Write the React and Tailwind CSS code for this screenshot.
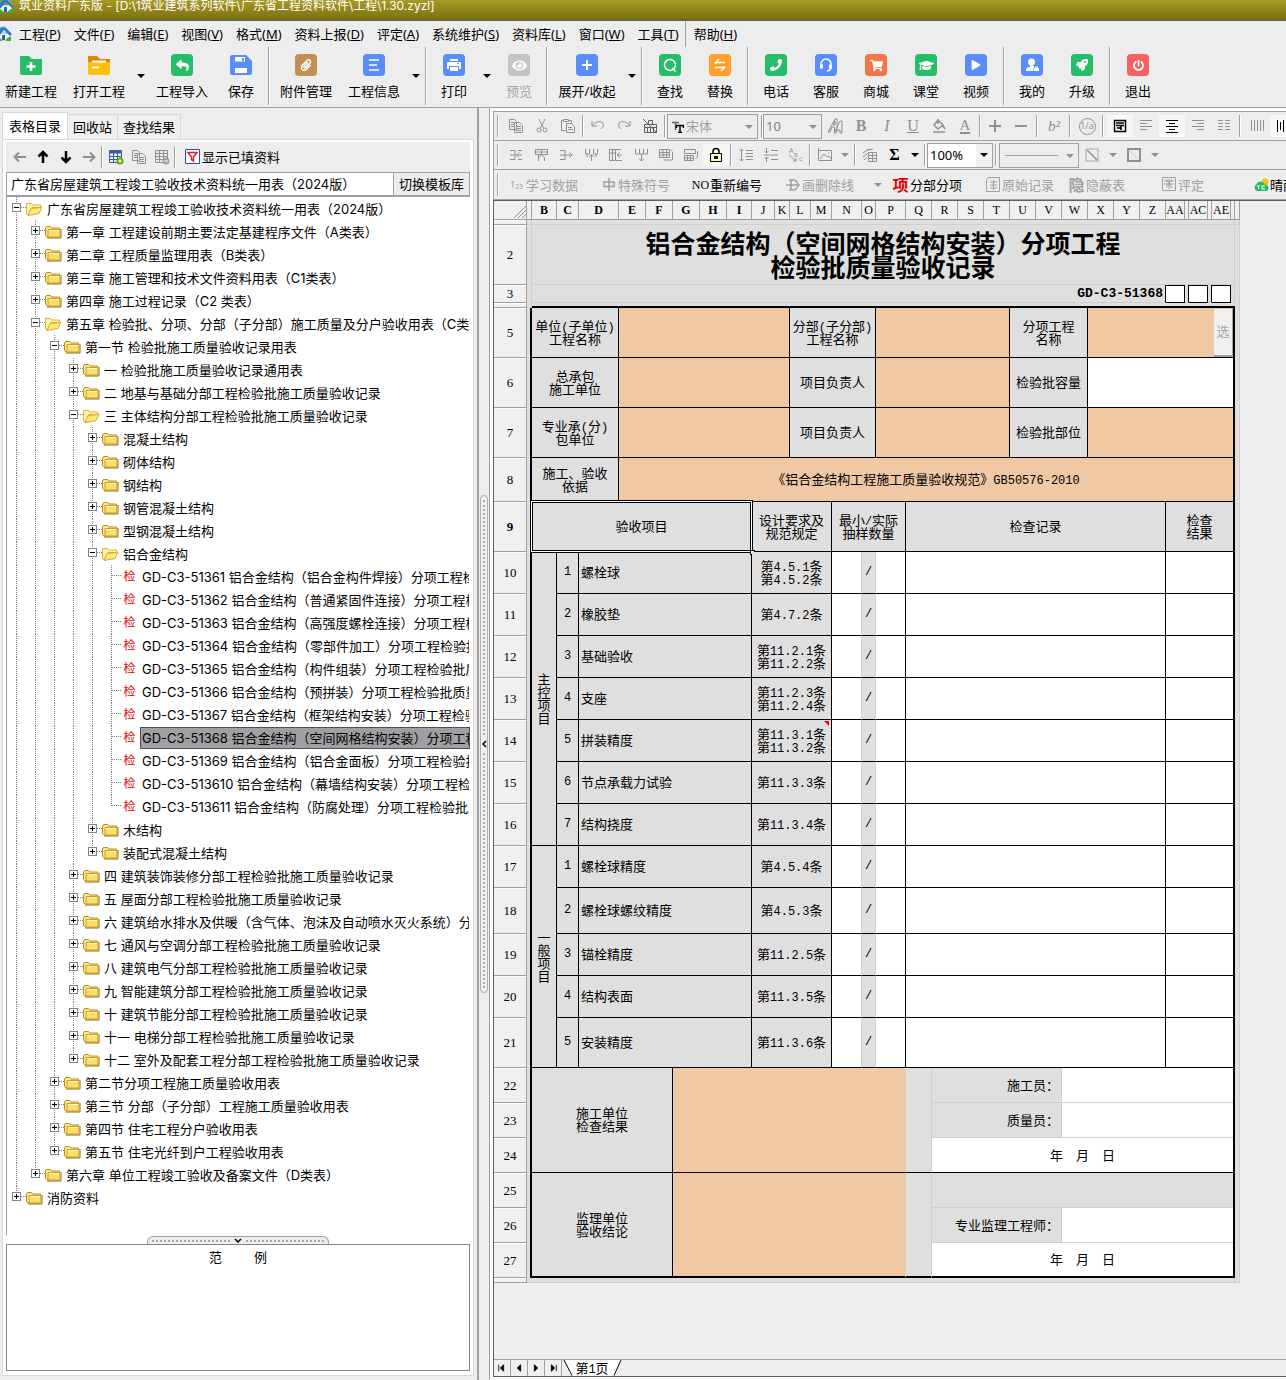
import React, { useState } from "react";
import {
  FaReply,
  FaPaperclip,
  FaEye,
  FaPhoneAlt,
  FaShoppingCart,
  FaGraduationCap,
  FaPlay,
  FaRocket,
  FaPowerOff,
} from "react-icons/fa";

/* ---------- Data ---------- */

const menus = [
  ["工程", "P"],
  ["文件", "F"],
  ["编辑", "E"],
  ["视图", "V"],
  ["格式", "M"],
  ["资料上报", "D"],
  ["评定", "A"],
  ["系统维护", "S"],
  ["资料库", "L"],
  ["窗口", "W"],
  ["工具", "T"],
];

const leaf = (label) => ({ label, leaf: true });
const closed = (label) => ({ label });

const tree = [
  {
    label: "广东省房屋建筑工程竣工验收技术资料统一用表（2024版）",
    openIcon: true,
    children: [
      closed("第一章 工程建设前期主要法定基建程序文件（A类表）"),
      closed("第二章 工程质量监理用表（B类表）"),
      closed("第三章 施工管理和技术文件资料用表（C1类表）"),
      closed("第四章 施工过程记录（C2 类表）"),
      {
        label: "第五章 检验批、分项、分部（子分部）施工质量及分户验收用表（C类表）",
        openIcon: true,
        children: [
          {
            label: "第一节 检验批施工质量验收记录用表",
            children: [
              closed("一 检验批施工质量验收记录通用表"),
              closed("二 地基与基础分部工程检验批施工质量验收记录"),
              {
                label: "三 主体结构分部工程检验批施工质量验收记录",
                openIcon: true,
                children: [
                  closed("混凝土结构"),
                  closed("砌体结构"),
                  closed("钢结构"),
                  closed("钢管混凝土结构"),
                  closed("型钢混凝土结构"),
                  {
                    label: "铝合金结构",
                    openIcon: true,
                    children: [
                      leaf("GD-C3-51361 铝合金结构（铝合金构件焊接）分项工程检验批质量验收记录"),
                      leaf("GD-C3-51362 铝合金结构（普通紧固件连接）分项工程检验批质量验收记录"),
                      leaf("GD-C3-51363 铝合金结构（高强度螺栓连接）分项工程检验批质量验收记录"),
                      leaf("GD-C3-51364 铝合金结构（零部件加工）分项工程检验批质量验收记录"),
                      leaf("GD-C3-51365 铝合金结构（构件组装）分项工程检验批质量验收记录"),
                      leaf("GD-C3-51366 铝合金结构（预拼装）分项工程检验批质量验收记录"),
                      leaf("GD-C3-51367 铝合金结构（框架结构安装）分项工程检验批质量验收记录"),
                      leaf("GD-C3-51368 铝合金结构（空间网格结构安装）分项工程检验批质量验收记录"),
                      leaf("GD-C3-51369 铝合金结构（铝合金面板）分项工程检验批质量验收记录"),
                      leaf("GD-C3-513610 铝合金结构（幕墙结构安装）分项工程检验批质量验收记录"),
                      leaf("GD-C3-513611 铝合金结构（防腐处理）分项工程检验批质量验收记录"),
                    ],
                  },
                  closed("木结构"),
                  closed("装配式混凝土结构"),
                ],
              },
              closed("四 建筑装饰装修分部工程检验批施工质量验收记录"),
              closed("五 屋面分部工程检验批施工质量验收记录"),
              closed("六 建筑给水排水及供暖（含气体、泡沫及自动喷水灭火系统）分部工程"),
              closed("七 通风与空调分部工程检验批施工质量验收记录"),
              closed("八 建筑电气分部工程检验批施工质量验收记录"),
              closed("九 智能建筑分部工程检验批施工质量验收记录"),
              closed("十 建筑节能分部工程检验批施工质量验收记录"),
              closed("十一 电梯分部工程检验批施工质量验收记录"),
              closed("十二 室外及配套工程分部工程检验批施工质量验收记录"),
            ],
          },
          closed("第二节分项工程施工质量验收用表"),
          closed("第三节 分部（子分部）工程施工质量验收用表"),
          closed("第四节 住宅工程分户验收用表"),
          closed("第五节 住宅光纤到户工程验收用表"),
        ],
      },
      closed("第六章 单位工程竣工验收及备案文件（D类表）"),
    ],
  },
  closed("消防资料"),
];

const columns = [
  ["", "w-[5px]"],
  ["B", "w-[25px]"],
  ["C", "w-[22px]"],
  ["D", "w-[40px]"],
  ["E", "w-[27px]"],
  ["F", "w-[27px]"],
  ["G", "w-[27px]"],
  ["H", "w-[27px]"],
  ["I", "w-[25px]"],
  ["J", "w-[23px]"],
  ["K", "w-[15px]"],
  ["L", "w-[21px]"],
  ["M", "w-[21px]"],
  ["N", "w-[30px]"],
  ["O", "w-[14px]"],
  ["P", "w-[30px]"],
  ["Q", "w-[26px]"],
  ["R", "w-[26px]"],
  ["S", "w-[26px]"],
  ["T", "w-[26px]"],
  ["U", "w-[26px]"],
  ["V", "w-[26px]"],
  ["W", "w-[26px]"],
  ["X", "w-[26px]"],
  ["Y", "w-[26px]"],
  ["Z", "w-[26px]"],
  ["AA", "w-[19px]"],
  ["", "w-[4px]"],
  ["AC", "w-[19px]"],
  ["", "w-[4px]"],
  ["AE", "w-[19px]"],
  ["", "w-[4px]"],
  ["", "w-[5px]"],
];

const items = [
  { row: 10, h: "h-[42px]", no: 1, name: "螺栓球", refs: ["第4.5.1条", "第4.5.2条"], group: "主控项目", span: 7 },
  { row: 11, h: "h-[42px]", no: 2, name: "橡胶垫", refs: ["第4.7.2条"] },
  { row: 12, h: "h-[42px]", no: 3, name: "基础验收", refs: ["第11.2.1条", "第11.2.2条"] },
  { row: 13, h: "h-[42px]", no: 4, name: "支座", refs: ["第11.2.3条", "第11.2.4条"] },
  { row: 14, h: "h-[42px]", no: 5, name: "拼装精度", refs: ["第11.3.1条", "第11.3.2条"], note: true },
  { row: 15, h: "h-[42px]", no: 6, name: "节点承载力试验", refs: ["第11.3.3条"] },
  { row: 16, h: "h-[42px]", no: 7, name: "结构挠度", refs: ["第11.3.4条"] },
  { row: 17, h: "h-[42px]", no: 1, name: "螺栓球精度", refs: ["第4.5.4条"], group: "一般项目", span: 5 },
  { row: 18, h: "h-[46px]", no: 2, name: "螺栓球螺纹精度", refs: ["第4.5.3条"] },
  { row: 19, h: "h-[42px]", no: 3, name: "锚栓精度", refs: ["第11.2.5条"] },
  { row: 20, h: "h-[42px]", no: 4, name: "结构表面", refs: ["第11.3.5条"] },
  { row: 21, h: "h-[50px]", no: 5, name: "安装精度", refs: ["第11.3.6条"] },
];

/* ---------- Icons ---------- */

const HouseIcon = () => (
  <svg viewBox="0 0 16 16" className="h-4 w-4 shrink-0">
    <path d="M2 7h12v7H2z" fill="#f4f8fb" stroke="#6c8ca0" strokeWidth=".6" />
    <path d="M0 8 5 1l4 0 7 7-2 2-6-6-5 6-3 0z" fill="#2b7cc4" />
    <path d="M5 1l4 0 6 6" fill="none" stroke="#7cbcf0" />
    <path d="M6 9h3v5H6z" fill="#2d6a94" />
    <path d="M0 11c3 0 5 1 6 4H1zM10 15c0-3 2-4 5-4v4z" fill="#3fae49" />
  </svg>
);

const FolderIcon = ({ open }) =>
  open ? (
    <svg viewBox="0 0 17 16" className="h-4 w-[17px] shrink-0">
      <path d="M.5 13V2.500h5l1 1.500h8v2.500H6L3 14z" fill="#fff3a6" stroke="#dcb53c" />
      <path d="M5 7.500c3 0 6-.5 11-1.500l-3 6.500-11 2z" fill="#ffe97c" stroke="#d9a92c" />
    </svg>
  ) : (
    <svg viewBox="0 0 17 16" className="h-4 w-[17px] shrink-0">
      <path d="M2 14h14V5" fill="none" stroke="#8a6a1c" />
      <path d="M.5 4 1.500 2.500h4L7 4h7.500v9H2L.5 11.500z" fill="#fce98e" stroke="#b98a1e" />
      <path d="M3 5.500h12v7.500H3z" fill="#fbdf6c" stroke="#cf9c24" />
      <path d="M4 6.500h10" stroke="#fff6c0" />
    </svg>
  );

const Tile = ({ className, children }) => (
  <span className={`flex h-[22px] w-[22px] items-center justify-center rounded text-white ${className}`}>
    {children}
  </span>
);

const Svg = ({ children, className = "h-4 w-4" }) => (
  <svg viewBox="0 0 16 16" fill="none" stroke="currentColor" className={className}>
    {children}
  </svg>
);

const Caret = ({ className = "border-t-black" }) => (
  <span className={`block h-0 w-0 border-x-4 border-t-4 border-x-transparent ${className}`} />
);

const glyphs = {
  copy: <path d="M1.500 1.500h5l2 2v8h-7zM6.500 4.500h5l3 3v7h-8zM8 8.500h5M8 10.500h5M8 12.500h5M3 4.500h3M3 6.500h3M3 8.500h3" />,
  cut: <path d="M5 1l4.500 9M11 1 6.500 10M5 10a2 2 0 1 0 .1 4 2 2 0 0 0 0-4M11 10a2 2 0 1 0 .1 4 2 2 0 0 0 0-4" />,
  paste: <path d="M3 2.500H1.500v10h4M9 2.500h2.500V5M3.500 1.500h5v2h-5zM6.500 5.500h5l3 3v6h-8zM8 9.500h4M8 11.500h5" />,
  undo: <path d="M2 3v5h5M2.500 7.500C5 3.500 11 2.500 13 5c1 2 0 4-2 6" />,
  redo: <path d="M14 3v5H9M13.500 7.500C11 3.500 5 2.500 3 5c-1 2 0 4 2 6" />,
  clear: <path d="M2.500 6.500h12v8h-12zM2 9.500h12M5.500 10v4M8.500 10v4M11.500 10v4M6.500 6V2.500h4V6M1 1l14 14" stroke="#606060" />,
  fill: <path d="M7 2 3 7l4 4 5-4zM7 1v5M11 6l3 5M2 14h12" strokeWidth="1.500" />,
  plus: <path d="M8 2v12M2 8h12" strokeWidth="2" />,
  minus: <path d="M2 8h12" strokeWidth="2" />,
  box: <path d="M2.500 2.500h11v11h-11zM4 5h8M4 7.500h8M5 10h5M9 12V7" strokeWidth="1.500" />,
  left: <path d="M2 2.500h12M2 5.500h7M2 8.500h12M2 11.500h7" />,
  center: <path d="M2 2.500h12M5 5.500h6M2 8.500h12M5 11.500h6M2 14.500h12" />,
  right: <path d="M2 2.500h12M7 5.500h7M2 8.500h12M7 11.500h7" />,
  justify: <path d="M2 2.500h5M9 2.500h5M2 5.500h5M9 5.500h5M2 8.500h5M9 8.500h5M2 11.500h5M9 11.500h5" />,
  bars: <path d="M2.500 2v11M5.500 2v11M8.500 2v11M11.500 2v11M14.500 2v11" />,
  bars2: <path d="M2.500 2v12M5.500 4v8M8.500 2v12M11.500 4v8" />,
  insRow: <path d="M2 3.500h5v9H2M2 8h5M14 8H9M11 5.500 8.500 8l2.500 2.500M10 3.500h4M10 12.500h4" />,
  insCol: <path d="M2.500 2.500h12v5h-12zM2 5h12M8.500 2v5M5.500 8v6M5.500 10.500l3-2.500 3 2.500V14" />,
  delRow: <path d="M2 3.500h5v9H2M2 8h12M11.500 5.500 14 8l-2.500 2.500" />,
  delCol: <path d="M2.500 2v5h4V2M10.500 2v5h4V2M8.500 14V8M6 10l2.500-2.500L11 10M4 7v3M13 7v3" />,
  split: <path d="M1.500 2.500h6v11h-6zM1.500 6h6M4.500 2v11M14 8H9M11.500 5.500 9 8l2.500 2.500M8 2.500h5M8 13.500h6" />,
  merge: <path d="M2.500 2v5h12V2M6.500 2v5M10.500 2v5M8.500 7v7M6 11.500 8.500 14l2.500-2.500" />,
  gridA: <path d="M1.500 2.500h10v8h-10zM1.500 5.500h10M1.500 8h10M5 2.500v8M8.500 2.500v8M14.500 5v8h-9M13 3.500h1.500" />,
  gridB: <path d="M1.500 2.500h11v4h-11zM1.500 8.500h9v5h-9zM1.500 11h9M4.500 8.500v5M7.500 8.500v5M14.500 4v6l-2 2" />,
  lineUp: <path d="M3.500 2v12M1.500 4l2-2 2 2M1.500 12l2 2 2-2M8 3.500h7M8 6.500h7M8 9.500h7M8 12.500h7" />,
  lineDn: <path d="M3.500 1v5M1.500 4l2 2 2-2M3.500 15v-5M1.500 12l2-2 2 2M8 3.500h7M1 8h14M8 12.500h7" />,
  picture: <path d="M1.500 3.500h13v10h-13zM3 12l4-5 3 3 2-1 2 3M11 6h1M1.500 1v3" />,
  note: <path d="M6.500 5.500h8v9h-8zM6 8.500h8M6 11.500h8M10.500 6v8M1 6l6-4M1 10l5-4M2 13l3-3M5 3l6-1" />,
  diag: (
    <>
      <path d="M2 2h12v12H2z" stroke="#c0c0c0" strokeWidth="1.500" />
      <path d="M3 3l10 10" strokeWidth="1.500" />
    </>
  ),
  frame: (
    <>
      <path d="M2 2h12v12H2z" strokeWidth="2" />
      <path d="M4 4l8 8" stroke="#c8c8c8" />
    </>
  ),
};

const Glyph = ({ name }) => <Svg>{glyphs[name]}</Svg>;

/* ---------- Top bars ---------- */

function MenuBar() {
  return (
    <nav className="flex h-[26px] items-center overflow-hidden whitespace-nowrap bg-[#ededed]">
      <div className="-ml-1 mr-[7px]">
        <HouseIcon />
      </div>
      <div className="flex gap-[13px]">
        {menus.map(([text, key]) => (
          <button key={key}>
            {text}(<u>{key}</u>)
          </button>
        ))}
      </div>
      <div className="ml-[6px] mr-2 h-full border-l border-[#a0a0a0]" />
      <button>
        帮助(<u>H</u>)
      </button>
    </nav>
  );
}

function BigButton({ label, width = "w-[50px]", disabled, children }) {
  return (
    <button
      disabled={disabled}
      className={`flex shrink-0 flex-col items-center gap-[5px] whitespace-nowrap pt-[3px] disabled:text-[#a8a8a8] ${width}`}
    >
      {children}
      <span className="leading-5">{label}</span>
    </button>
  );
}

const BigSep = () => (
  <div className="w-[6px] shrink-0 pl-[2px]">
    <div className="h-[58px] w-[2px] border-l border-r border-l-[#a0a0a0] border-r-white" />
  </div>
);

const BigCaret = () => (
  <button aria-label="更多" className="flex h-11 w-[15px] shrink-0 items-center justify-center">
    <Caret />
  </button>
);

function MainToolbar() {
  return (
    <div className="flex h-[60px] items-start overflow-hidden bg-[#ededed]">
      <div className="flex h-[58px] items-center">
        <BigButton label="新建工程" width="w-[62px] mr-[3px]">
          <svg viewBox="0 0 22 22" className="h-[22px] w-[22px]">
            <path d="M0 2h9l3 3h10v14a2 2 0 0 1-2 2H2a2 2 0 0 1-2-2z" fill="#27bd68" />
            <path d="M11 8v9M6.500 12.500h9" stroke="#fff" strokeWidth="2.500" />
          </svg>
        </BigButton>
        <BigButton label="打开工程" width="w-[68px]">
          <svg viewBox="0 0 22 22" className="h-[22px] w-[22px]">
            <path d="M0 2h9l3 3h10v6H0z" fill="#d98704" />
            <path d="M0 8h22v11a2 2 0 0 1-2 2H2a2 2 0 0 1-2-2z" fill="#ffc107" />
            <path d="M4 7.500h14M4 13.500h7" stroke="#fff" strokeWidth="2" />
          </svg>
        </BigButton>
        <BigCaret />
        <BigButton label="工程导入" width="w-[68px]">
          <Tile className="bg-[#27bd68]"><FaReply size={13} /></Tile>
        </BigButton>
        <BigButton label="保存">
          <svg viewBox="0 0 22 22" className="h-[22px] w-[22px]">
            <path d="M2 1h14l6 6v12a2 2 0 0 1-2 2H2a2 2 0 0 1-2-2V3a2 2 0 0 1 2-2z" fill="#588dfb" />
            <path d="M5 3h10v4.500H5zM5 14h12v5H5z" fill="#fff" />
            <path d="M12 4h2v3h-2z" fill="#588dfb" />
          </svg>
        </BigButton>
        <BigSep />
        <BigButton label="附件管理" width="w-[68px]">
          <Tile className="bg-[#bf9155]"><FaPaperclip size={12} /></Tile>
        </BigButton>
        <BigButton label="工程信息" width="w-[68px]">
          <Tile className="bg-[#588dfb]"><Svg><path d="M3 3h10M3 8h8M3 13h10" strokeWidth="1.500" /></Svg></Tile>
        </BigButton>
        <BigCaret />
        <BigSep />
        <BigButton label="打印">
          <Tile className="bg-[#588dfb]">
            <svg viewBox="0 0 16 16" className="h-4 w-4" fill="#fff">
              <path d="M4 2h8v2H4zM2 5h12a1 1 0 0 1 1 1v6h-2V9H3v3H1V6a1 1 0 0 1 1-1zM4 10h8v4H4z" />
              <path d="M11 6h2v1h-2z" fill="#588dfb" />
            </svg>
          </Tile>
        </BigButton>
        <BigCaret />
        <BigButton label="预览" disabled>
          <Tile className="bg-[#c4c4c4]"><FaEye size={15} /></Tile>
        </BigButton>
        <BigSep />
        <BigButton label="展开/收起" width="w-[74px]">
          <Tile className="bg-[#588dfb]"><Svg><path d="M8 3v10M3 8h10" strokeWidth="2" /></Svg></Tile>
        </BigButton>
        <BigCaret />
        <BigSep />
        <BigButton label="查找">
          <Tile className="bg-[#27bd68]">
            <Svg><circle cx="8" cy="8" r="5.500" strokeWidth="1.500" /><path d="m10.500 11 3 3.500" strokeWidth="1.500" /></Svg>
          </Tile>
        </BigButton>
        <BigButton label="替换">
          <Tile className="bg-[#ff9f2e]">
            <Svg><path d="M13 5.500H3.500l3.500-3.500M3 10.500h9.500L9 14M4 5v2M12 11V9" strokeWidth="1.500" /></Svg>
          </Tile>
        </BigButton>
        <BigSep />
        <BigButton label="电话">
          <Tile className="bg-[#27bd68]"><FaPhoneAlt size={12} className="-scale-x-100" /></Tile>
        </BigButton>
        <BigButton label="客服">
          <Tile className="bg-[#588dfb]">
            <Svg>
              <path d="M3 9V7a5 5 0 0 1 10 0v3c0 2-1 3.500-4 4" strokeWidth="1.500" />
              <path d="M3.500 7.500v4M12.500 7.500v4" strokeWidth="3" />
            </Svg>
          </Tile>
        </BigButton>
        <BigButton label="商城">
          <Tile className="bg-[#f3764a]"><FaShoppingCart size={13} /></Tile>
        </BigButton>
        <BigButton label="课堂">
          <Tile className="bg-[#27bd68]"><FaGraduationCap size={15} /></Tile>
        </BigButton>
        <BigButton label="视频">
          <Tile className="bg-[#588dfb]"><FaPlay size={10} /></Tile>
        </BigButton>
        <BigSep />
        <BigButton label="我的">
          <Tile className="bg-[#588dfb]">
            <svg viewBox="0 0 16 16" className="h-4 w-4" fill="currentColor">
              <circle cx="7.500" cy="5" r="3.500" />
              <path d="M6 8h3l1 2-1 4H2c0-3 1-4 4-4z" />
              <path d="M10 11h5v3h-5zM11 11V9.500h3V11h-1v-.5h-1v.5z" />
            </svg>
          </Tile>
        </BigButton>
        <BigButton label="升级">
          <Tile className="bg-[#27bd68]"><FaRocket size={12} /></Tile>
        </BigButton>
        <BigSep />
        <BigButton label="退出">
          <Tile className="bg-[#f56262]"><FaPowerOff size={11} /></Tile>
        </BigButton>
      </div>
    </div>
  );
}

/* ---------- Left panel ---------- */

function Guide({ line, last, branch, children }) {
  return (
    <span className="relative h-full w-[19px] shrink-0">
      {line && (
        <span
          className={`absolute left-[9px] top-0 border-l border-dotted border-[#808080] ${last ? "h-[11px]" : "h-full"}`}
        />
      )}
      {branch && <span className="absolute left-[9px] right-0 top-[10px] border-t border-dotted border-[#808080]" />}
      {children}
    </span>
  );
}

function TreeNode({ node, last, trail, selected, onSelect }) {
  const [open, setOpen] = useState(Boolean(node.children));
  const isSelected = selected === node.label;

  return (
    <li>
      <div className="flex h-[23px] items-center">
        {trail.map((line, i) => (
          <Guide key={i} line={line} />
        ))}
        <Guide line last={last} branch>
          {!node.leaf && (
            <button
              aria-label={node.label}
              onClick={() => setOpen(!open)}
              className="absolute left-[5px] top-[6px] flex h-[9px] w-[9px] items-center justify-center border border-[#848484] bg-white"
            >
              <span className="absolute h-px w-[5px] bg-black" />
              {!open && <span className="absolute h-[5px] w-px bg-black" />}
            </button>
          )}
        </Guide>
        {node.leaf ? (
          <span className="w-[17px] shrink-0 text-center text-[12px] text-[#e60000]">检</span>
        ) : (
          <FolderIcon open={node.openIcon} />
        )}
        <button
          onClick={() => onSelect(node.label)}
          className={`ml-[2px] h-[22px] overflow-hidden whitespace-nowrap border px-px text-left ${
            isSelected ? "min-w-0 flex-1 border-[#505050] bg-[#a0a0a4]" : "border-transparent"
          }`}
        >
          {node.label}
        </button>
      </div>
      {open && node.children && (
        <ul>
          {node.children.map((child, i) => (
            <TreeNode
              key={child.label}
              node={child}
              last={i === node.children.length - 1}
              trail={[...trail, !last]}
              selected={selected}
              onSelect={onSelect}
            />
          ))}
        </ul>
      )}
    </li>
  );
}

const SmallSep = ({ className = "mx-1" }) => (
  <span className={`h-[22px] w-[2px] shrink-0 border-l border-r border-l-[#a0a0a0] border-r-white ${className}`} />
);

function LeftPanel() {
  const [tab, setTab] = useState("表格目录");
  const [selected, setSelected] = useState(
    "GD-C3-51368 铝合金结构（空间网格结构安装）分项工程检验批质量验收记录"
  );

  return (
    <aside className="flex w-[479px] shrink-0 flex-col border-r-2 border-[#a0a0a0] bg-[#ededed] pb-1 pl-[2px] pr-[3px] pt-1">
      {/* Tabs */}
      <div className="flex h-[27px] items-end">
        {["表格目录", "回收站", "查找结果"].map((name) => (
          <button
            key={name}
            onClick={() => setTab(name)}
            className={`whitespace-nowrap border border-b-0 border-[#d9d9d9] ${
              tab === name ? "relative z-10 h-[27px] bg-white px-[6px]" : "h-[25px] border-l-0 bg-[#efefef] px-[5px]"
            }`}
          >
            {name}
          </button>
        ))}
      </div>

      <div className="flex flex-1 flex-col border border-[#d9d9d9] bg-white px-[3px] pb-1 pt-[2px]">
        <div className="flex h-[30px] items-center bg-[#ededed] pl-[2px] text-[#909090]">
          <button aria-label="后退" className="flex w-[23px] justify-center">
            <Svg><path d="M2 8h12M7 3.500 2.500 8 7 12.500" strokeWidth="2" /></Svg>
          </button>
          <button aria-label="上移" className="flex w-[23px] justify-center text-black">
            <Svg><path d="M8 14V3M3.500 7.500 8 3l4.500 4.500" strokeWidth="2.500" /></Svg>
          </button>
          <button aria-label="下移" className="flex w-[23px] justify-center text-black">
            <Svg><path d="M8 2v11M3.500 8.500 8 13l4.500-4.500" strokeWidth="2.500" /></Svg>
          </button>
          <button aria-label="前进" className="flex w-[23px] justify-center">
            <Svg><path d="M14 8H2M9 3.500 13.500 8 9 12.500" strokeWidth="2" /></Svg>
          </button>
          <SmallSep className="mx-px" />
          <button aria-label="添加表格" className="flex w-[23px] justify-center">
            <Svg>
              <path d="M1.500 1.500h12v12h-12zM1.500 7.500h12M1.500 10.500h12M5.500 4v9M9.500 4v9" stroke="#3e5f9e" />
              <path d="M1.500 3h12" stroke="#3e5f9e" strokeWidth="3" />
              <circle cx="12" cy="12" r="3.500" fill="#5aa800" stroke="none" />
              <path d="M12 10v4M10 12h4" stroke="#fff" />
            </Svg>
          </button>
          <button aria-label="复制表格" className="flex w-[23px] justify-center"><Glyph name="copy" /></button>
          <button aria-label="删除表格" className="flex w-[23px] justify-center">
            <Svg>
              <path d="M1.500 1.500h12v12h-12zM1.500 4.500h12M1.500 7.500h12M1.500 10.500h12M5.500 2v11M9.500 2v11" />
              <circle cx="12" cy="12" r="3.500" fill="#a0a0a0" stroke="none" />
              <path d="M10 12h4" stroke="#fff" />
            </Svg>
          </button>
          <SmallSep className="ml-px mr-[9px]" />
          <button className="flex items-center whitespace-nowrap text-black">
            <Svg className="mr-px h-4 w-4">
              <path d="M.5.5h14v14H.5z" fill="#fff" stroke="#2e4a9e" />
              <path d="M3 3.500h9L8.500 8v4l-2-1.500V8z" stroke="#e02020" strokeWidth="1.500" />
            </Svg>
            显示已填资料
          </button>
        </div>

        <div className="flex h-6 shrink-0 border border-[#a0a0a0]">
          <input
            aria-label="模板库"
            readOnly
            value="广东省房屋建筑工程竣工验收技术资料统一用表（2024版）"
            className="min-w-0 flex-1 bg-white px-1 font-['Inter','Noto_Sans_CJK_SC',sans-serif] outline-none"
          />
          <button className="w-[76px] border-l border-[#a0a0a0] bg-[#ededed] text-center">切换模板库</button>
        </div>

        <ul className="min-h-0 flex-1 overflow-hidden border-l border-t border-[#a0a0a0] font-['Inter','Noto_Sans_CJK_SC',sans-serif]">
          {tree.map((node, i) => (
            <TreeNode
              key={node.label}
              node={node}
              last={i === tree.length - 1}
              trail={[]}
              selected={selected}
              onSelect={setSelected}
            />
          ))}
        </ul>

        {/* Splitter grip */}
        <button
          aria-label="收起范例"
          className="mx-auto flex h-2 w-[182px] shrink-0 items-center gap-1 rounded-t-md border border-b-0 border-[#a0a0a0] bg-[#ededed] px-1"
        >
          <span className="flex-1 border-t-2 border-dotted border-[#a8a8a8]" />
          <svg viewBox="0 0 8 5" className="h-[5px] w-2"><path d="m1 1 3 3 3-3" fill="none" stroke="#000" strokeWidth="1.500" /></svg>
          <span className="flex-1 border-t-2 border-dotted border-[#a8a8a8]" />
        </button>
        <section className="h-[127px] shrink-0 border border-[#7d868e] pt-1 text-center">
          <h2 className="flex justify-center gap-8 leading-4">
            <span>范</span>
            <span>例</span>
          </h2>
        </section>
      </div>
    </aside>
  );
}

/* ---------- Right toolbars ---------- */

function Tool({ name, children, on, width = "w-[26px]" }) {
  return (
    <button
      aria-label={name}
      className={`flex h-[22px] shrink-0 items-center justify-center ${width} ${on ? "bg-[#f7f7f7] text-black" : ""}`}
    >
      {children || <Glyph name={name} />}
    </button>
  );
}

const FormatBar = () => (
  <div className="flex h-[29px] items-center overflow-hidden border-b border-[#a0a0a0] pl-[3px] text-[#909090]">
    <SmallSep className="ml-0 mr-1" />
    <Tool name="copy" />
    <Tool name="cut" />
    <Tool name="paste" />
    <SmallSep className="mx-px" />
    <Tool name="undo" />
    <Tool name="redo" />
    <Tool name="clear" />
    <SmallSep className="mx-px" />
    <div className="relative h-[25px] w-[91px] shrink-0 border border-[#a0a0a0]">
      <svg viewBox="0 0 12 12" className="absolute left-1 top-[6px] h-3 w-3">
        <path d="M0 1.500h7M3.500 1v8" stroke="#606060" strokeWidth="1.500" />
        <path d="M4 4.500h8M8 4v8M6 11.500h4M4.500 4v3M11.500 4v3" stroke="#000" strokeWidth="1.500" />
      </svg>
      <select aria-label="字体" disabled className="h-full w-full appearance-none bg-transparent pl-[18px] text-[#a0a0a0]">
        <option>宋体</option>
      </select>
      <Caret className="absolute right-1 top-[10px] border-t-[#909090]" />
    </div>
    <SmallSep className="ml-[3px] mr-0" />
    <div className="relative h-[25px] w-[59px] shrink-0 border border-[#a0a0a0]">
      <select aria-label="字号" disabled className="h-full w-full appearance-none bg-transparent pl-[2px] text-[#808080]">
        <option>10</option>
      </select>
      <Caret className="absolute right-1 top-[10px] border-t-[#909090]" />
    </div>
    <div className="flex shrink-0 font-['Liberation_Serif',serif] text-[16px]">
      <Tool name="字符">
        <Svg>
          <path d="M1 14 8 1h2v12H7.500V9H5l-2 5zM6 7h2V3z" />
          <path d="M7 15l6-12h2v12h-2v-3h-2l-2 3z" />
        </Svg>
      </Tool>
      <Tool name="加粗"><b>B</b></Tool>
      <Tool name="倾斜"><i>I</i></Tool>
      <Tool name="下划线"><u>U</u></Tool>
      <Tool name="fill" />
      <Tool name="颜色"><span className="border-b-2 border-[#909090] text-[15px] leading-[13px]">A</span></Tool>
    </div>
    <SmallSep className="mx-px" />
    <Tool name="plus" />
    <Tool name="minus" />
    <SmallSep className="ml-[2px] mr-[3px]" />
    <Tool name="上标"><i className="font-['Liberation_Serif',serif] text-[15px]">b²</i></Tool>
    <SmallSep className="ml-[2px] mr-[3px]" />
    <Tool name="分数">
      <span className="flex h-[17px] w-[17px] items-center justify-center rounded-full border border-[#909090] text-[9px]">1/a</span>
    </Tool>
    <SmallSep className="ml-[2px] mr-[3px]" />
    <Tool name="box" on />
    <Tool name="left" />
    <Tool name="center" on />
    <Tool name="right" />
    <Tool name="justify" />
    <SmallSep className="ml-[2px] mr-[3px]" />
    <Tool name="bars" />
    <Tool name="bars2" on />
  </div>
);

const EditBar = () => (
  <div className="flex h-[29px] items-center overflow-hidden border-b border-[#a0a0a0] pl-[3px] text-[#909090]">
    <SmallSep className="ml-0 mr-1" />
    {["insRow", "insCol", "delRow", "delCol", "split", "merge", "gridA", "gridB"].map((name) => (
      <Tool key={name} name={name} width="w-[25px]" />
    ))}
    <Tool name="锁定" on>
      <svg viewBox="0 0 16 16" className="h-4 w-4">
        <path d="M5 7V4.500a3 3 0 0 1 6 0V7" fill="none" stroke="#000" strokeWidth="1.500" />
        <path d="M2.500 6.500h11v8h-11z" fill="#fff9b0" stroke="#000" />
        <path d="M6 9h4v3H6z" fill="#00107c" />
      </svg>
    </Tool>
    <SmallSep className="mx-px" />
    <Tool name="lineUp" width="w-[25px]" />
    <Tool name="lineDn" width="w-[25px]" />
    <Tool name="文字方向" width="w-[25px]">
      <Svg>
        <path d="M1 8l7 6M8 11v3H5" />
        <text x="1" y="6" fontSize="7" fill="currentColor" stroke="none">A</text>
        <text x="6" y="10" fontSize="6" fill="currentColor" stroke="none">B</text>
        <text x="11" y="14" fontSize="6" fill="currentColor" stroke="none">C</text>
      </Svg>
    </Tool>
    <SmallSep className="mx-px" />
    <Tool name="picture" width="w-[25px]" />
    <Tool name="图片选项" width="w-4"><Caret className="border-t-[#909090]" /></Tool>
    <SmallSep className="mx-px" />
    <Tool name="note" width="w-[25px]" />
    <Tool name="求和" width="w-[25px]">
      <span className="font-['Liberation_Serif',serif] text-[16px] font-bold leading-none text-black">Σ</span>
    </Tool>
    <Tool name="求和选项" width="w-4"><Caret /></Tool>
    <SmallSep className="mx-px" />
    <div className="relative h-[25px] w-[66px] shrink-0 border border-[#a0a0a0] bg-white text-black">
      <select aria-label="缩放" className="h-full w-full appearance-none bg-transparent pl-[2px]">
        <option>100%</option>
      </select>
      <span className="pointer-events-none absolute right-0 top-0 flex h-full w-4 items-center justify-center bg-[#f0f0f0]">
        <Caret />
      </span>
    </div>
    <SmallSep className="ml-[2px] mr-[2px]" />
    <div className="relative h-[25px] w-[80px] shrink-0 border border-[#a0a0a0]">
      <select aria-label="线型" disabled className="h-full w-full appearance-none">
        <option></option>
      </select>
      <span className="absolute left-[5px] top-[11px] w-[53px] border-t border-[#a0a0a0]" />
      <Caret className="absolute right-1 top-[10px] border-t-[#909090]" />
    </div>
    <Tool name="diag" />
    <Tool name="斜线选项" width="w-4"><Caret className="border-t-[#909090]" /></Tool>
    <Tool name="frame" />
    <Tool name="边框选项" width="w-4"><Caret className="border-t-[#909090]" /></Tool>
  </div>
);

const TextTool = ({ icon, label, on, className }) => (
  <button className={`flex shrink-0 items-center whitespace-nowrap pl-1 ${className} ${on ? "text-black" : "text-[#a0a0a0]"}`}>
    <span className="flex w-[19px] shrink-0 justify-center">{icon}</span>
    {label}
  </button>
);

const FunctionBar = () => (
  <div className="flex h-[30px] items-center overflow-hidden border-b border-[#a0a0a0] pl-[3px]">
    <SmallSep className="ml-0 mr-1" />
    <TextTool className="w-[92px]" icon={<span className="text-[9px]">1<sub>23</sub></span>} label="学习数据" />
    <TextTool
      className="w-[92px]"
      icon={<Svg><path d="M3 5h10v4.500H3zM8 1v13" strokeWidth="1.500" /></Svg>}
      label="特殊符号"
    />
    <TextTool
      on
      className="w-[92px]"
      icon={<span className="font-['Liberation_Serif',serif] text-[12px]">NO</span>}
      label="重新编号"
    />
    <TextTool
      className="w-[84px]"
      icon={<Svg><path d="M4 3h5c5 1 5 9 0 10H4M6 3v10M1 8h14" strokeWidth="1.500" /></Svg>}
      label="画删除线"
    />
    <button aria-label="删除线选项" className="flex w-6 shrink-0 justify-end pr-[5px]">
      <Caret className="border-t-[#909090]" />
    </button>
    <TextTool
      on
      className="w-[92px]"
      icon={<b className="text-[16px] leading-4 text-[#e60000]">项</b>}
      label="分部分项"
    />
    <TextTool
      className="w-[84px]"
      icon={<Svg><path d="M3.500.5h11v14h-13v-11zM5 5h7M5 8h7M5 11h7M8.500 3v10" /></Svg>}
      label="原始记录"
    />
    <TextTool className="w-[92px]" icon={<b className="text-[16px] leading-4">隐</b>} label="隐蔽表" />
    <TextTool
      className="w-[92px]"
      icon={<Svg><path d="M1.500.5h13v13h-13zM3 4h10M3 7h10M5 2l6 9M11 2l-6 9M8 2v10" /></Svg>}
      label="评定"
    />
    <TextTool
      on
      className=""
      icon={
        <svg viewBox="0 0 16 14" className="h-[14px] w-4">
          <circle cx="12" cy="4" r="3.500" fill="#ffc107" />
          <path d="M4 13a4 4 0 0 1-.5-7 5 5 0 0 1 9 1A3 3 0 0 1 12.500 13z" fill="#27bd68" />
          <path d="M4 8h3M5.500 8v3M12 8H9v3h3" fill="none" stroke="#fff" />
        </svg>
      }
      label="晴雨表"
    />
  </div>
);

/* ---------- Sheet ---------- */

const RowHead = ({ children, bold }) => (
  <th
    className={`overflow-hidden border-b border-r border-[#a0a0a0] bg-[#f0f0f0] p-0 font-['Liberation_Serif',serif] text-[13px] leading-none shadow-[inset_0_1px_0_#fff] ${
      bold ? "font-bold" : "font-normal"
    }`}
  >
    {children}
  </th>
);

const tones = {
  gray: "bg-[#dfdfdf]",
  peach: "bg-[#f0c8a4]",
  white: "bg-white",
};

function Cell({ tone = "gray", span, rows, edge = "border-b border-r border-black", className = "", children }) {
  return (
    <td colSpan={span} rowSpan={rows} className={`p-0 text-center ${tones[tone]} ${edge} ${className}`}>
      {children}
    </td>
  );
}

const lastEdge = "border-b border-r-2 border-black";
const faint = "border-b border-r border-[#d0d0c8]";
const faintLast = "border-r-2 border-black shadow-[inset_0_-1px_0_#d0d0c8]";

// Latin runs are set in a monospace face, close to half the width of a CJK glyph
const Mixed = ({ text }) =>
  text.split(/([\x20-\x7e]+)/).map((part, i) =>
    i % 2 ? (
      <span key={i} className="font-['Liberation_Mono',monospace] text-[12px] leading-[0px]">{part}</span>
    ) : (
      part
    )
  );

const Lines = ({ of }) =>
  of.map((line) => (
    <div key={line}>
      <Mixed text={line} />
    </div>
  ));

function HeaderFields({ row, label, mid, right, tone = "peach", picker }) {
  return (
    <tr className="h-[50px]">
      <RowHead>{row}</RowHead>
      {row === 5 && <Cell rows={23} edge="border-r-2 border-black" />}
      <Cell span={3}><Lines of={label} /></Cell>
      <Cell span={7} tone="peach" />
      <Cell span={4}><Lines of={mid} /></Cell>
      <Cell span={5} tone="peach" />
      <Cell span={3}><Lines of={right} /></Cell>
      <Cell span={9} tone={tone} edge={lastEdge}>
        {picker && (
          <button className="float-right h-[48px] w-[19px] border-b-2 border-r border-[#a0a0a0] bg-[#f0f0f0] text-[#a8a8a8]">
            选
          </button>
        )}
      </Cell>
      {row === 5 && <Cell rows={23} edge="border-r border-[#d0d0c8]" />}
    </tr>
  );
}

function SignRow({ row, label, first, title, bottom }) {
  return (
    <tr className="h-[35px]">
      <RowHead>{row}</RowHead>
      {first && (
        <>
          <Cell span={5} rows={3} edge={title.edge}><Lines of={title.lines} /></Cell>
          <Cell span={10} rows={3} tone="peach" edge={title.faintEdge} />
          <Cell rows={3} edge={title.faintEdge} />
        </>
      )}
      {label === "date" && (
        <Cell span={15} tone="white" edge={bottom ? "border-b-2 border-r-2 border-black" : lastEdge}>年　月　日</Cell>
      )}
      {label === "" && <Cell span={15} edge={faintLast} />}
      {label && label !== "date" && (
        <>
          <Cell span={5} edge={faint} className="pr-[2px] !text-right">{label}：</Cell>
          <Cell span={10} tone="white" edge={faintLast} />
        </>
      )}
    </tr>
  );
}

function Sheet() {
  return (
    <table className="w-[746px] table-fixed border-separate border-spacing-0 text-[13px] leading-[13px]">
      <colgroup>
        <col className="w-[33px]" />
        {columns.map(([, width], i) => (
          <col key={i} className={width} />
        ))}
      </colgroup>
      <thead>
        <tr className="h-[19px]">
          <th className="border-b border-r border-[#a0a0a0] bg-[#f0f0f0] p-0">
            <svg viewBox="0 0 12 12" className="ml-auto mt-1 h-3 w-3" stroke="#909090">
              <path d="M0 12 12 0M4 12l8-8M8 12l4-4" />
            </svg>
          </th>
          {columns.map(([name], i) => (
            <th
              key={i}
              className={`border-b border-r border-[#a0a0a0] bg-[#f0f0f0] p-0 font-['Liberation_Serif',serif] text-[12px] leading-none ${
                i > 0 && i < 9 ? "font-bold" : "font-normal"
              }`}
            >
              {name}
            </th>
          ))}
        </tr>
      </thead>
      <tbody>
        <tr className="h-[5px]">
          <RowHead />
          <Cell edge={faint} />
          <Cell span={31} edge={faint} />
          <Cell edge={faint} />
        </tr>
        <tr className="h-[60px]">
          <RowHead>2</RowHead>
          <Cell rows={3} edge="border-r border-[#d0d0c8]" />
          <Cell span={31} edge={faint} className="text-[25px] font-bold leading-6">
            <Lines of={["铝合金结构（空间网格结构安装）分项工程", "检验批质量验收记录"]} />
          </Cell>
          <Cell rows={3} edge="border-r border-[#d0d0c8]" />
        </tr>
        <tr className="h-[18px]">
          <RowHead>3</RowHead>
          <Cell
            span={25}
            edge="border-b border-r border-b-[#d0d0c8] border-r-black"
            className="pr-[2px] !text-right font-['Liberation_Mono',monospace] text-[13px] font-bold leading-none"
          >
            GD-C3-51368
          </Cell>
          <Cell tone="white" edge="border-y border-r border-black" />
          <Cell edge="border-b border-r border-b-[#d0d0c8] border-r-black" />
          <Cell tone="white" edge="border-y border-r border-black" />
          <Cell edge="border-b border-r border-b-[#d0d0c8] border-r-black" />
          <Cell tone="white" edge="border-y border-r border-black" />
          <Cell edge={faint} />
        </tr>
        <tr className="h-[5px]">
          <RowHead />
          <Cell span={31} edge="border-b-2 border-black" />
        </tr>

        <HeaderFields row={5} label={["单位(子单位)", "工程名称"]} mid={["分部(子分部)", "工程名称"]} right={["分项工程", "名称"]} picker />
        <HeaderFields row={6} label={["总承包", "施工单位"]} mid={["项目负责人"]} right={["检验批容量"]} tone="white" />
        <HeaderFields row={7} label={["专业承(分)", "包单位"]} mid={["项目负责人"]} right={["检验批部位"]} />

        <tr className="h-[44px]">
          <RowHead>8</RowHead>
          <Cell span={3}><Lines of={["施工、验收", "依据"]} /></Cell>
          <Cell span={28} tone="peach" edge={lastEdge}>
            <Mixed text="《铝合金结构工程施工质量验收规范》GB50576-2010" />
          </Cell>
        </tr>
        <tr className="h-[50px]">
          <RowHead bold>9</RowHead>
          <Cell span={8} className="relative">
            验收项目
            {/* active cell frame */}
            <span className="pointer-events-none absolute inset-0 border border-black shadow-[0_0_0_1px_#fff,0_0_0_2px_#000]" />
            <span className="pointer-events-none absolute -bottom-1 -right-1 h-[5px] w-[5px] border border-black bg-white" />
          </Cell>
          <Cell span={4}><Lines of={["设计要求及", "规范规定"]} /></Cell>
          <Cell span={3}><Lines of={["最小/实际", "抽样数量"]} /></Cell>
          <Cell span={10}>检查记录</Cell>
          <Cell span={6} edge={lastEdge}><Lines of={["检查", "结果"]} /></Cell>
        </tr>

        {items.map((item) => (
          <tr key={item.row} className={item.h}>
            <RowHead>{item.row}</RowHead>
            {item.group && (
              <Cell rows={item.span}><Lines of={item.group.split("")} /></Cell>
            )}
            <Cell className="font-['Liberation_Mono',monospace] text-[12px]">{item.no}</Cell>
            <Cell span={6} className="pl-[2px] !text-left">{item.name}</Cell>
            <Cell span={4} className="relative">
              <Lines of={item.refs} />
              {item.note && (
                <span className="absolute right-[2px] top-px h-0 w-0 border-l-[5px] border-t-[5px] border-l-transparent border-t-red-600" />
              )}
            </Cell>
            <Cell tone="white" edge="border-b border-r border-b-black border-r-[#d0d0c8]" />
            <Cell edge="border-b border-r border-b-black border-r-[#d0d0c8]" className="font-['Liberation_Mono',monospace] text-[12px]">
              /
            </Cell>
            <Cell tone="white" />
            <Cell span={10} tone="white" />
            <Cell span={6} tone="white" edge={lastEdge} />
          </tr>
        ))}

        <SignRow
          row={22}
          label="施工员"
          first
          title={{
            lines: ["施工单位", "检查结果"],
            edge: "border-b border-r border-black",
            faintEdge: "border-b border-r border-b-black border-r-[#d0d0c8]",
          }}
        />
        <SignRow row={23} label="质量员" />
        <SignRow row={24} label="date" />
        <SignRow
          row={25}
          label=""
          first
          title={{
            lines: ["监理单位", "验收结论"],
            edge: "border-b-2 border-r border-black",
            faintEdge: "border-b-2 border-r border-b-black border-r-[#d0d0c8]",
          }}
        />
        <SignRow row={26} label="专业监理工程师" />
        <SignRow row={27} label="date" bottom />
        <tr className="h-[5px]">
          <RowHead />
          <Cell edge={faint} />
          <Cell span={31} edge={faint} />
          <Cell edge={faint} />
        </tr>
      </tbody>
    </table>
  );
}

const navPaths = [
  "M2 2v8M8 2 4 6l4 4z",
  "M8 2 4 6l4 4z",
  "M4 2l4 4-4 4z",
  "M4 2l4 4-4 4zM10 2v8",
];

function SheetTabs() {
  return (
    <div className="flex h-[17px] shrink-0 border-t border-[#a0a0a0]">
      {navPaths.map((d, i) => (
        <button key={i} aria-label={`翻页${i + 1}`} className="flex w-[17px] items-center justify-center border-r border-[#a0a0a0]">
          <svg viewBox="0 0 12 12" className="h-[10px] w-[10px]" stroke="#000"><path d={d} /></svg>
        </button>
      ))}
      <button className="relative flex w-[60px] items-center justify-center leading-none">
        <svg viewBox="0 0 60 16" className="absolute inset-0 h-4 w-[60px]">
          <path d="M2 0l8 15.500h42L59 0z" fill="#fff" />
          <path d="M2 0l8 15.500M52 15.500 59 0" stroke="#000" fill="none" />
        </svg>
        <span className="relative"><Mixed text="第1页" /></span>
      </button>
    </div>
  );
}

export default function App() {
  return (
    <div className="flex min-h-screen flex-col overflow-hidden bg-[#ededed] font-['Noto_Sans','Noto_Sans_CJK_SC',sans-serif] text-[13px] leading-5 text-black">
      {/* Title bar */}
      <header className="flex h-[21px] items-start overflow-hidden whitespace-nowrap border-b-2 border-[#6b6636] bg-linear-to-b from-[#a89a24] to-[#7c7210] text-white">
        <div className="-ml-[2px] -mt-[2px] mr-[5px]">
          <HouseIcon />
        </div>
        <h1 className="font-['Inter','Noto_Sans_CJK_SC',sans-serif] text-[12px] leading-3">
          筑业资料广东版 - [D:\1筑业建筑系列软件\广东省工程资料软件\工程\1.30.zyzl]
        </h1>
      </header>
      <MenuBar />
      <MainToolbar />

      <main className="flex flex-1 border-t border-[#a0a0a0] bg-[#ededed]">
        <LeftPanel />

        {/* Vertical splitter */}
        <div className="flex w-[10px] shrink-0 flex-col items-center bg-[#ededed] pt-[387px]">
          <button
            aria-label="收起目录"
            className="flex h-[498px] w-2 flex-col items-center rounded border border-[#b0b0b0] bg-[#f0f0f0] py-1"
          >
            <span className="flex-1 border-l-2 border-dotted border-[#a8a8a8]" />
            <svg viewBox="0 0 5 10" className="my-1 h-[10px] w-[5px]"><path d="M4 2 1 5l3 3" fill="none" stroke="#000" strokeWidth="1.500" /></svg>
            <span className="flex-1 border-l-2 border-dotted border-[#a8a8a8]" />
          </button>
        </div>

        <section className="flex min-w-0 flex-1 flex-col border-l border-[#a0a0a0] bg-white pb-[3px] pl-[3px] pt-[3px]">
          <div className="border-l border-t border-[#a0a0a0] bg-[#ededed]">
            <FormatBar />
            <EditBar />
            <FunctionBar />
          </div>
          <div className="flex min-h-0 flex-1 flex-col overflow-hidden border-y border-l border-[#606060] bg-[#efefef]">
            <div className="flex-1">
              <Sheet />
            </div>
            <SheetTabs />
          </div>
        </section>
      </main>
    </div>
  );
}
